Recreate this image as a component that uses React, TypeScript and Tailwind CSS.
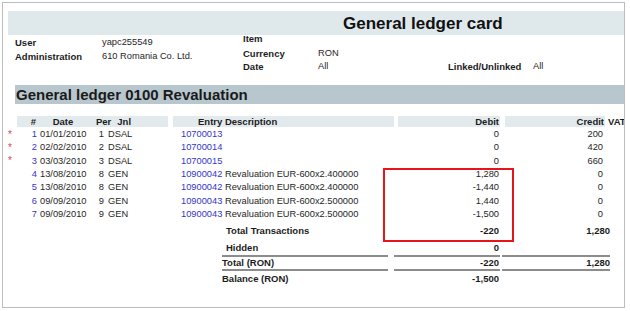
import React from 'react';

type Row = {
  n: number;
  date: string;
  per: number;
  jnl: string;
  entry: string;
  desc: string;
  debit: string;
  credit: string;
  flagged?: boolean;
};

const rows: Row[] = [
  { n: 1, date: '01/01/2010', per: 1, jnl: 'DSAL', entry: '10700013', desc: '', debit: '0', credit: '200', flagged: true },
  { n: 2, date: '02/02/2010', per: 2, jnl: 'DSAL', entry: '10700014', desc: '', debit: '0', credit: '420', flagged: true },
  { n: 3, date: '03/03/2010', per: 3, jnl: 'DSAL', entry: '10700015', desc: '', debit: '0', credit: '660', flagged: true },
  { n: 4, date: '13/08/2010', per: 8, jnl: 'GEN', entry: '10900042', desc: 'Revaluation EUR-600x2.400000', debit: '1,280', credit: '0' },
  { n: 5, date: '13/08/2010', per: 8, jnl: 'GEN', entry: '10900042', desc: 'Revaluation EUR-600x2.400000', debit: '-1,440', credit: '0' },
  { n: 6, date: '09/09/2010', per: 9, jnl: 'GEN', entry: '10900043', desc: 'Revaluation EUR-600x2.500000', debit: '1,440', credit: '0' },
  { n: 7, date: '09/09/2010', per: 9, jnl: 'GEN', entry: '10900043', desc: 'Revaluation EUR-600x2.500000', debit: '-1,500', credit: '0' },
];

function TotalRow({ label, debit, credit, height, lined, indent }: { label: string; debit: string; credit?: string; height: string; lined?: boolean; indent?: boolean }) {
  const line = lined ? 'border-t-2 border-[#8c8c8c]' : '';
  return (
    <div className={`flex ${lined ? 'mt-[1px]' : ''}`}>
      <div className="w-[219px] shrink-0" />
      <div className={`w-[166px] shrink-0 ${line} ${height} flex items-center ${indent ? 'pl-[4px]' : ''} font-bold text-[9.5px] text-[#1c1c1c]`}>{label}</div>
      <div className="w-[6px] shrink-0" />
      <div className={`w-[106px] shrink-0 ${line} ${height} flex items-center justify-end pr-[1px] font-bold text-[9.5px] text-[#1c1c1c]`}>{debit}</div>
      <div className="w-[2px] shrink-0" />
      <div className={`w-[108px] shrink-0 ${line} ${height} flex items-center justify-end font-bold text-[9.5px] text-[#1c1c1c]`}>{credit}</div>
    </div>
  );
}

export default function App() {
  return (
    <div className="relative w-[630px] h-[311px] bg-white pt-[2px] pl-[2px] font-['Liberation_Sans',Arial,sans-serif] leading-none text-[#262626]">
      <div className="w-[623px] h-[306px] border border-[#bdbdbd] overflow-hidden">
        {/* title band */}
        <div className="mt-[8px] ml-[5px] h-[24px] bg-[#dfe9ec] flex items-center pl-[335px]">
          <span className="text-[17px] font-bold text-[#111]">General ledger card</span>
        </div>

        {/* info block */}
        <div className="flex h-[50px]">
          <div className="ml-[12px] w-[87px] pt-[1px] font-bold text-[9.5px] text-[#1c1c1c]">
            <div className="h-[14px] flex items-center">User</div>
            <div className="h-[14px] flex items-center">Administration</div>
          </div>
          <div className="w-[141px] pt-[1px] text-[9.3px]">
            <div className="h-[14px] flex items-center">yapc255549</div>
            <div className="h-[14px] flex items-center">610 Romania Co. Ltd.</div>
          </div>
          <div className="w-[75px] font-bold text-[9.5px] text-[#1c1c1c]">
            <div className="h-[8px] flex items-center">Item</div>
            <div className="mt-[4px] h-[13px] flex items-center">Currency</div>
            <div className="h-[13px] flex items-center">Date</div>
          </div>
          <div className="w-[130px] pt-[12px] text-[9.3px]">
            <div className="h-[13px] flex items-center">RON</div>
            <div className="h-[13px] flex items-center">All</div>
          </div>
          <div className="w-[85px] pt-[25px] font-bold text-[9.5px] text-[#1c1c1c]">
            <div className="h-[13px] flex items-center">Linked/Unlinked</div>
          </div>
          <div className="pt-[25px] text-[9.3px]">
            <div className="h-[13px] flex items-center">All</div>
          </div>
        </div>

        {/* section band */}
        <div className="ml-[12px] h-[19px] bg-[#b8c6ce] flex items-center pl-[1px]">
          <span className="text-[15px] font-bold text-[#1a1a1a]">General ledger 0100 Revaluation</span>
        </div>

        {/* table header */}
        <div className="mt-[12px] flex h-[11px] font-bold text-[9.5px] text-[#1c1c1c]">
          <div className="w-[14px] shrink-0" />
          <div className="w-[151px] shrink-0 bg-[#e3eaed] flex items-center">
            <div className="w-[21px] pr-[2px] text-right">#</div>
            <div className="w-[50px] text-center">Date</div>
            <div className="ml-[8px]">Per</div>
            <div className="ml-[6px]">Jnl</div>
          </div>
          <div className="w-[5px] shrink-0" />
          <div className="w-[221px] shrink-0 bg-[#e3eaed] flex items-center pl-[25px]">Entry Description</div>
          <div className="w-[4px] shrink-0" />
          <div className="w-[102px] shrink-0 bg-[#e3eaed] flex items-center justify-end pr-[1px]">Debit</div>
          <div className="w-[5px] shrink-0" />
          <div className="w-[100px] shrink-0 bg-[#e3eaed] flex items-center justify-end pr-[1px]">Credit</div>
          <div className="pl-[3px] flex items-center whitespace-nowrap">VAT</div>
        </div>

        {/* rows */}
        <div className="mt-[1px] text-[9.3px]">
          {rows.map((r) => (
            <div key={r.n} className="flex h-[13.33px] items-center whitespace-nowrap">
              <div className="w-[14px] shrink-0 text-center text-[10px] text-[#e0455a]">{r.flagged ? '*' : ''}</div>
              <div className="w-[21px] shrink-0 pr-[1px] text-right text-[#3535c8]">{r.n}</div>
              <div className="w-[50px] shrink-0 pl-[2px]">{r.date}</div>
              <div className="w-[17px] shrink-0 pr-[1px] text-right">{r.per}</div>
              <div className="w-[68px] shrink-0 pl-[3px]">{r.jnl}</div>
              <div className="w-[225px] shrink-0 pl-[8px]">
                <span className="text-[#3535c8]">{r.entry}</span>
                {r.desc && <span> {r.desc}</span>}
              </div>
              <div className="w-[102px] shrink-0 pr-[1px] text-right">{r.debit}</div>
              <div className="w-[105px] shrink-0 pr-[2px] text-right">{r.credit}</div>
            </div>
          ))}
        </div>

        {/* totals */}
        <TotalRow label="Total Transactions" debit="-220" credit="1,280" height="h-[19px]" indent />
        <TotalRow label="Hidden" debit="0" height="h-[14px]" indent />
        <TotalRow label="Total (RON)" debit="-220" credit="1,280" height="h-[13px]" lined />
        <TotalRow label="Balance (RON)" debit="-1,500" height="h-[17px]" lined />
      </div>

      {/* annotation box */}
      <div className="absolute left-[383px] top-[168px] w-[131px] h-[74px] border-2 border-[#e8141c]" />
    </div>
  );
}
